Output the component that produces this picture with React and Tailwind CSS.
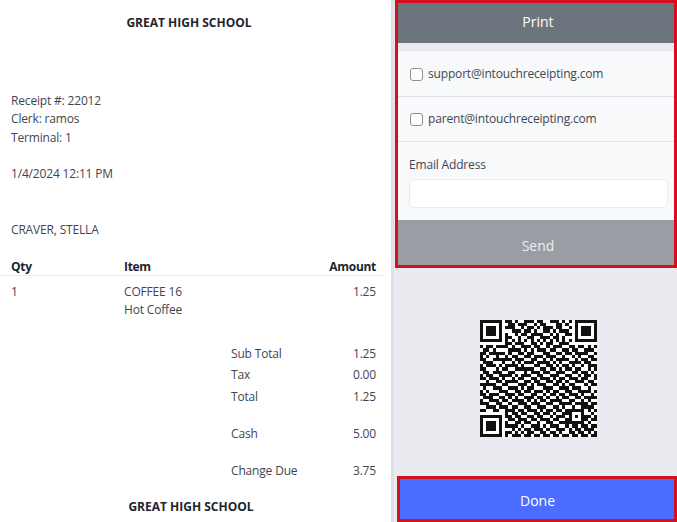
import React from 'react';

const qrRows = [
  '1111111011010011101100111010101111111',
  '1000001001101110010110001101001000001',
  '1011101011100101101011101100101011101',
  '1011101000111011010011010111001011101',
  '1011101010010110111100101001101011101',
  '1000001011001001100111011010001000001',
  '1111111010101010101010101010101111111',
  '0000000011011100110101100111000000000',
  '1011011110100111011001011100110110101',
  '0110100001111010101110110011011001110',
  '1101111101001101100011001101101111001',
  '1010010010110011011101110010010100110',
  '1100111111011100110010101111001011011',
  '0111000100101011101111010100111101100',
  '1011101011110100011001101011010010111',
  '1100010110011111100110110101101100101',
  '0110111001100010111011001110011011010',
  '1011001111010111001100111001100101101',
  '1101110100101100110111010110111011001',
  '0010011011110011011001101101001110110',
  '1111100110001110101110011010110001011',
  '0100111001110101100011100111011100100',
  '1010001110011011011101011001100111101',
  '1101110011101100110010110110111010010',
  '0111001101010011101101001011001101111',
  '1001110110111101010110111100110010100',
  '1110011001001110111001100111101111011',
  '0011101110110011001110011010010011110',
  '1100110011101101110101101101111110101',
  '0000000010110110011011010011100010010',
  '1111111011011001101100101110101011101',
  '1000001001101110110111011001100011011',
  '1011101010011011001001100111111110100',
  '1011101011110100111010111001011011011',
  '1011101000101011011101001110101101110',
  '1000001011010101100110110100110110101',
  '1111111010111011011011011011011011011',
];

const Line = ({ className = '', children }) => (
  <p className={`h-[18.5px] leading-[18.5px] ${className}`}>{children}</p>
);

const TotalRow = ({ label, value, className = '' }) => (
  <div className={`flex justify-between pl-[231px] pr-[15px] leading-[18px] ${className}`}>
    <span>{label}</span>
    <span>{value}</span>
  </div>
);

const EmailRow = ({ email, className = '' }) => (
  <label className={`flex items-center gap-[5px] border-b border-[#dfe1e6] pl-[12px] ${className}`}>
    <span className="h-[13px] w-[13px] rounded-[3px] border border-[#8f8f8f] bg-white" />
    <span>{email}</span>
  </label>
);

export default function App() {
  return (
    <div className="flex h-[522px] w-[677px] overflow-hidden bg-[#e9ebf0] font-['Open_Sans',sans-serif] text-[12px] tracking-[-0.17px] text-[#3f4650]">
      {/* receipt */}
      <div className="h-full w-[391px] shrink-0 bg-white">
        <h1 className="pt-[14px] pr-[13px] text-center leading-[18px] font-bold tracking-normal text-[#212529]">GREAT HIGH SCHOOL</h1>
        <div className="mt-[59.5px] pl-[11px]">
          <Line>Receipt #: 22012</Line>
          <Line>Clerk: ramos</Line>
          <Line>Terminal: 1</Line>
          <Line className="mt-[18px]">1/4/2024 12:11 PM</Line>
          <Line className="mt-[37.5px]">CRAVER, STELLA</Line>
        </div>
        <div className="mt-[18px] mr-[6px] ml-[1px] grid h-[18px] grid-cols-[113px_1fr_auto] border-b border-[#e9ebf0] pr-[9px] pl-[10px] leading-[17px] font-bold tracking-[-0.3px] text-[#212529]">
          <span>Qty</span>
          <span>Item</span>
          <span>Amount</span>
        </div>
        <div className="mt-[7px] grid grid-cols-[113px_1fr_auto] pr-[15px] pl-[11px] leading-[18px]">
          <span>1</span>
          <div>
            <p>COFFEE 16</p>
            <p>Hot Coffee</p>
          </div>
          <span>1.25</span>
        </div>
        <div className="mt-[26px]">
          <TotalRow label="Sub Total" value="1.25" />
          <TotalRow label="Tax" value="0.00" className="mt-[3.5px]" />
          <TotalRow label="Total" value="1.25" className="mt-[3.5px]" />
          <TotalRow label="Cash" value="5.00" className="mt-[19px]" />
          <TotalRow label="Change Due" value="3.75" className="mt-[19px]" />
        </div>
        <h2 className="mt-[18px] pr-[9px] text-center leading-[18px] font-bold tracking-normal text-[#212529]">GREAT HIGH SCHOOL</h2>
      </div>

      {/* actions */}
      <div className="flex h-full min-w-0 flex-1 flex-col border-l-[3px] border-[#dee0e5]">
        <div className="ml-px border-[3px] border-[#d3101c]">
          <button className="h-[40px] w-full bg-[#6c757d] pb-[4px] pl-[4px] text-[14px] tracking-normal text-white">Print</button>
          <div className="h-[8px] border-b border-[#dfe1e6] bg-[#e9ebf0]" />
          <div className="bg-[#f8f9fb]">
            <EmailRow email="support@intouchreceipting.com" className="h-[46px] pt-[1px]" />
            <EmailRow email="parent@intouchreceipting.com" className="h-[45px]" />
            <div className="h-[78px] pt-[14px] pr-[6px] pl-[11px]">
              <p className="leading-[18px]">Email Address</p>
              <input className="mt-[5px] h-[29px] w-full rounded-[5px] border border-[#e9ecef] bg-white" />
            </div>
          </div>
          <button className="h-[45px] w-full bg-[#9a9da3] pt-[5px] pl-[4px] text-[14px] tracking-normal text-[#eceef0]">Send</button>
        </div>

        <div className="flex flex-1 items-center justify-center pt-[12px] pl-[6px]">
          <svg viewBox="0 0 37 37" width="117" height="117" shapeRendering="crispEdges" className="bg-white">
            {qrRows.flatMap((row, y) =>
              [...row].map((c, x) => (c === '1' ? <rect key={`${x}-${y}`} x={x} y={y} width="1" height="1" fill="#111" /> : null))
            )}
          </svg>
        </div>

        <button className="ml-[3px] h-[46px] border-[3px] border-[#d3101c] bg-[#4a6cff] pt-[2px] pl-[1px] text-[14px] tracking-normal text-white">Done</button>
      </div>
    </div>
  );
}
